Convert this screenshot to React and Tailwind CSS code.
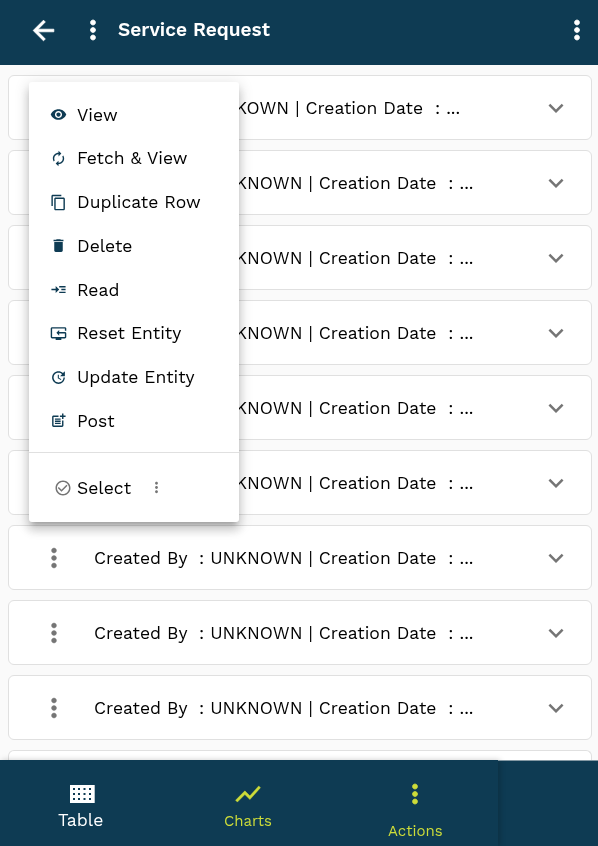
import {
  MdArrowBack,
  MdMoreVert,
  MdVisibility,
  MdAutorenew,
  MdContentCopy,
  MdDelete,
  MdReadMore,
  MdResetTv,
  MdUpdate,
  MdPostAdd,
  MdCheckCircleOutline,
  MdExpandMore,
  MdShowChart,
} from 'react-icons/md';

const menuItems = [
  { label: 'View', Icon: MdVisibility },
  { label: 'Fetch & View', Icon: MdAutorenew },
  { label: 'Duplicate Row', Icon: MdContentCopy },
  { label: 'Delete', Icon: MdDelete },
  { label: 'Read', Icon: MdReadMore },
  { label: 'Reset Entity', Icon: MdResetTv },
  { label: 'Update Entity', Icon: MdUpdate },
  { label: 'Post', Icon: MdPostAdd },
];

const rows = ['UNKOWN', ...Array(8).fill('UNKNOWN')];

function Row({ name }) {
  return (
    <div className="flex h-[65px] shrink-0 items-center rounded-md border border-[#e0e0e0] bg-white">
      <MdMoreVert className="ml-[30.3px] size-[30px] shrink-0 text-[#757575] [&>path:last-child]:stroke-[0.3]" />
      <div className="ml-[25px] whitespace-pre text-[17.55px] leading-6 will-change-transform">
        <span>Created By</span>
        <span>{'  : '}</span>
        <span>{name}</span>
        <span>{' | '}</span>
        <span>Creation Date</span>
        <span>{'  : '}</span>
        <span>...</span>
      </div>
      <MdExpandMore className="mr-5 ml-auto size-[30px] shrink-0 text-[#757575]" />
    </div>
  );
}

function TableIcon() {
  return (
    <svg viewBox="0 0 25 18" className="h-[18px] w-[25px]" fill="none">
      <path d="M0 0h24.7v18H0z" fill="white" />
      {[3, 8, 13].map((y) =>
        [3, 8, 13.5, 19].map((x) => (
          <rect key={`${x}-${y}`} x={x} y={y} width="2" height="2" fill="#0e3b53" />
        ))
      )}
    </svg>
  );
}

export default function App() {
  return (
    <div className="relative flex h-[846px] w-[598px] flex-col overflow-hidden bg-[#fafafa] font-['Work_Sans',Inter,sans-serif] font-normal text-black">
      <header className="flex h-[65px] shrink-0 items-center bg-[#0e3b53] pb-[5px] text-white">
        <MdArrowBack className="ml-7 size-[31px] [&>path:last-child]:stroke-[0.6]" />
        <MdMoreVert className="ml-[19px] size-[30px] [&>path:last-child]:stroke-[0.6]" />
        <h1 className="ml-[10px] text-[19.1px] font-semibold will-change-transform">Service Request</h1>
        <MdMoreVert className="mr-[6px] ml-auto size-[30px] [&>path:last-child]:stroke-[0.6]" />
      </header>

      <main className="flex min-h-0 flex-1 flex-col gap-[10px] overflow-hidden pt-[10px] pr-[6px] pl-2">
        {rows.map((name, i) => (
          <Row key={i} name={name} />
        ))}
        <div className="h-[10px] shrink-0 rounded-t-md border border-b-0 border-[#e0e0e0] bg-white" />
      </main>

      <footer className="flex h-[86px] shrink-0 bg-[#0e3b53]">
        <div className="flex w-[498px] shadow-[2px_0_6px_rgba(0,0,0,0.2)]">
          <div className="flex w-[164px] flex-col items-center pt-[25px] text-white">
            <TableIcon />
            <span className="mt-[5px] mr-[2px] text-[17.6px] leading-6 will-change-transform">Table</span>
          </div>
          <div className="flex w-[168px] flex-col items-center pt-[19px] text-[#cddc39]">
            <MdShowChart className="size-[30px] [&>path:last-child]:stroke-[0.3]" />
            <span className="mt-[2px] text-[15px] leading-5 will-change-transform">Charts</span>
          </div>
          <div className="flex w-[166px] flex-col items-center pt-[19px] text-[#cddc39]">
            <MdMoreVert className="size-[30px] [&>path:last-child]:stroke-[0.6]" />
            <span className="mt-3 text-[15px] leading-5 will-change-transform">Actions</span>
          </div>
        </div>
        <div className="flex-1 border-t border-[#8499a4]" />
      </footer>

      <div className="absolute top-[82px] left-[29px] flex h-[440px] w-[210px] flex-col rounded-[3px] bg-white shadow-[0_5px_5px_-3px_rgba(0,0,0,0.2),0_8px_10px_1px_rgba(0,0,0,0.14),0_3px_14px_2px_rgba(0,0,0,0.12)]">
        <div className="flex h-[371px] flex-col border-b border-[#e0e0e0] pt-[10.7px]">
          {menuItems.map(({ label, Icon }) => (
            <div key={label} className="flex h-[43.77px] items-center pl-[21px]">
              <Icon className="size-[17px] text-[#0e3b53]" />
              <span className="ml-[10px] text-[17.55px] leading-6 whitespace-nowrap will-change-transform">{label}</span>
            </div>
          ))}
        </div>
        <div className="flex flex-1 items-center">
          <MdCheckCircleOutline className="ml-[25px] size-[18px] text-[#757575]" />
          <span className="ml-[5px] w-[71px] pt-px text-[17.55px] leading-6 will-change-transform">Select</span>
          <MdMoreVert className="size-[17px] text-[#757575]" />
        </div>
      </div>
    </div>
  );
}
